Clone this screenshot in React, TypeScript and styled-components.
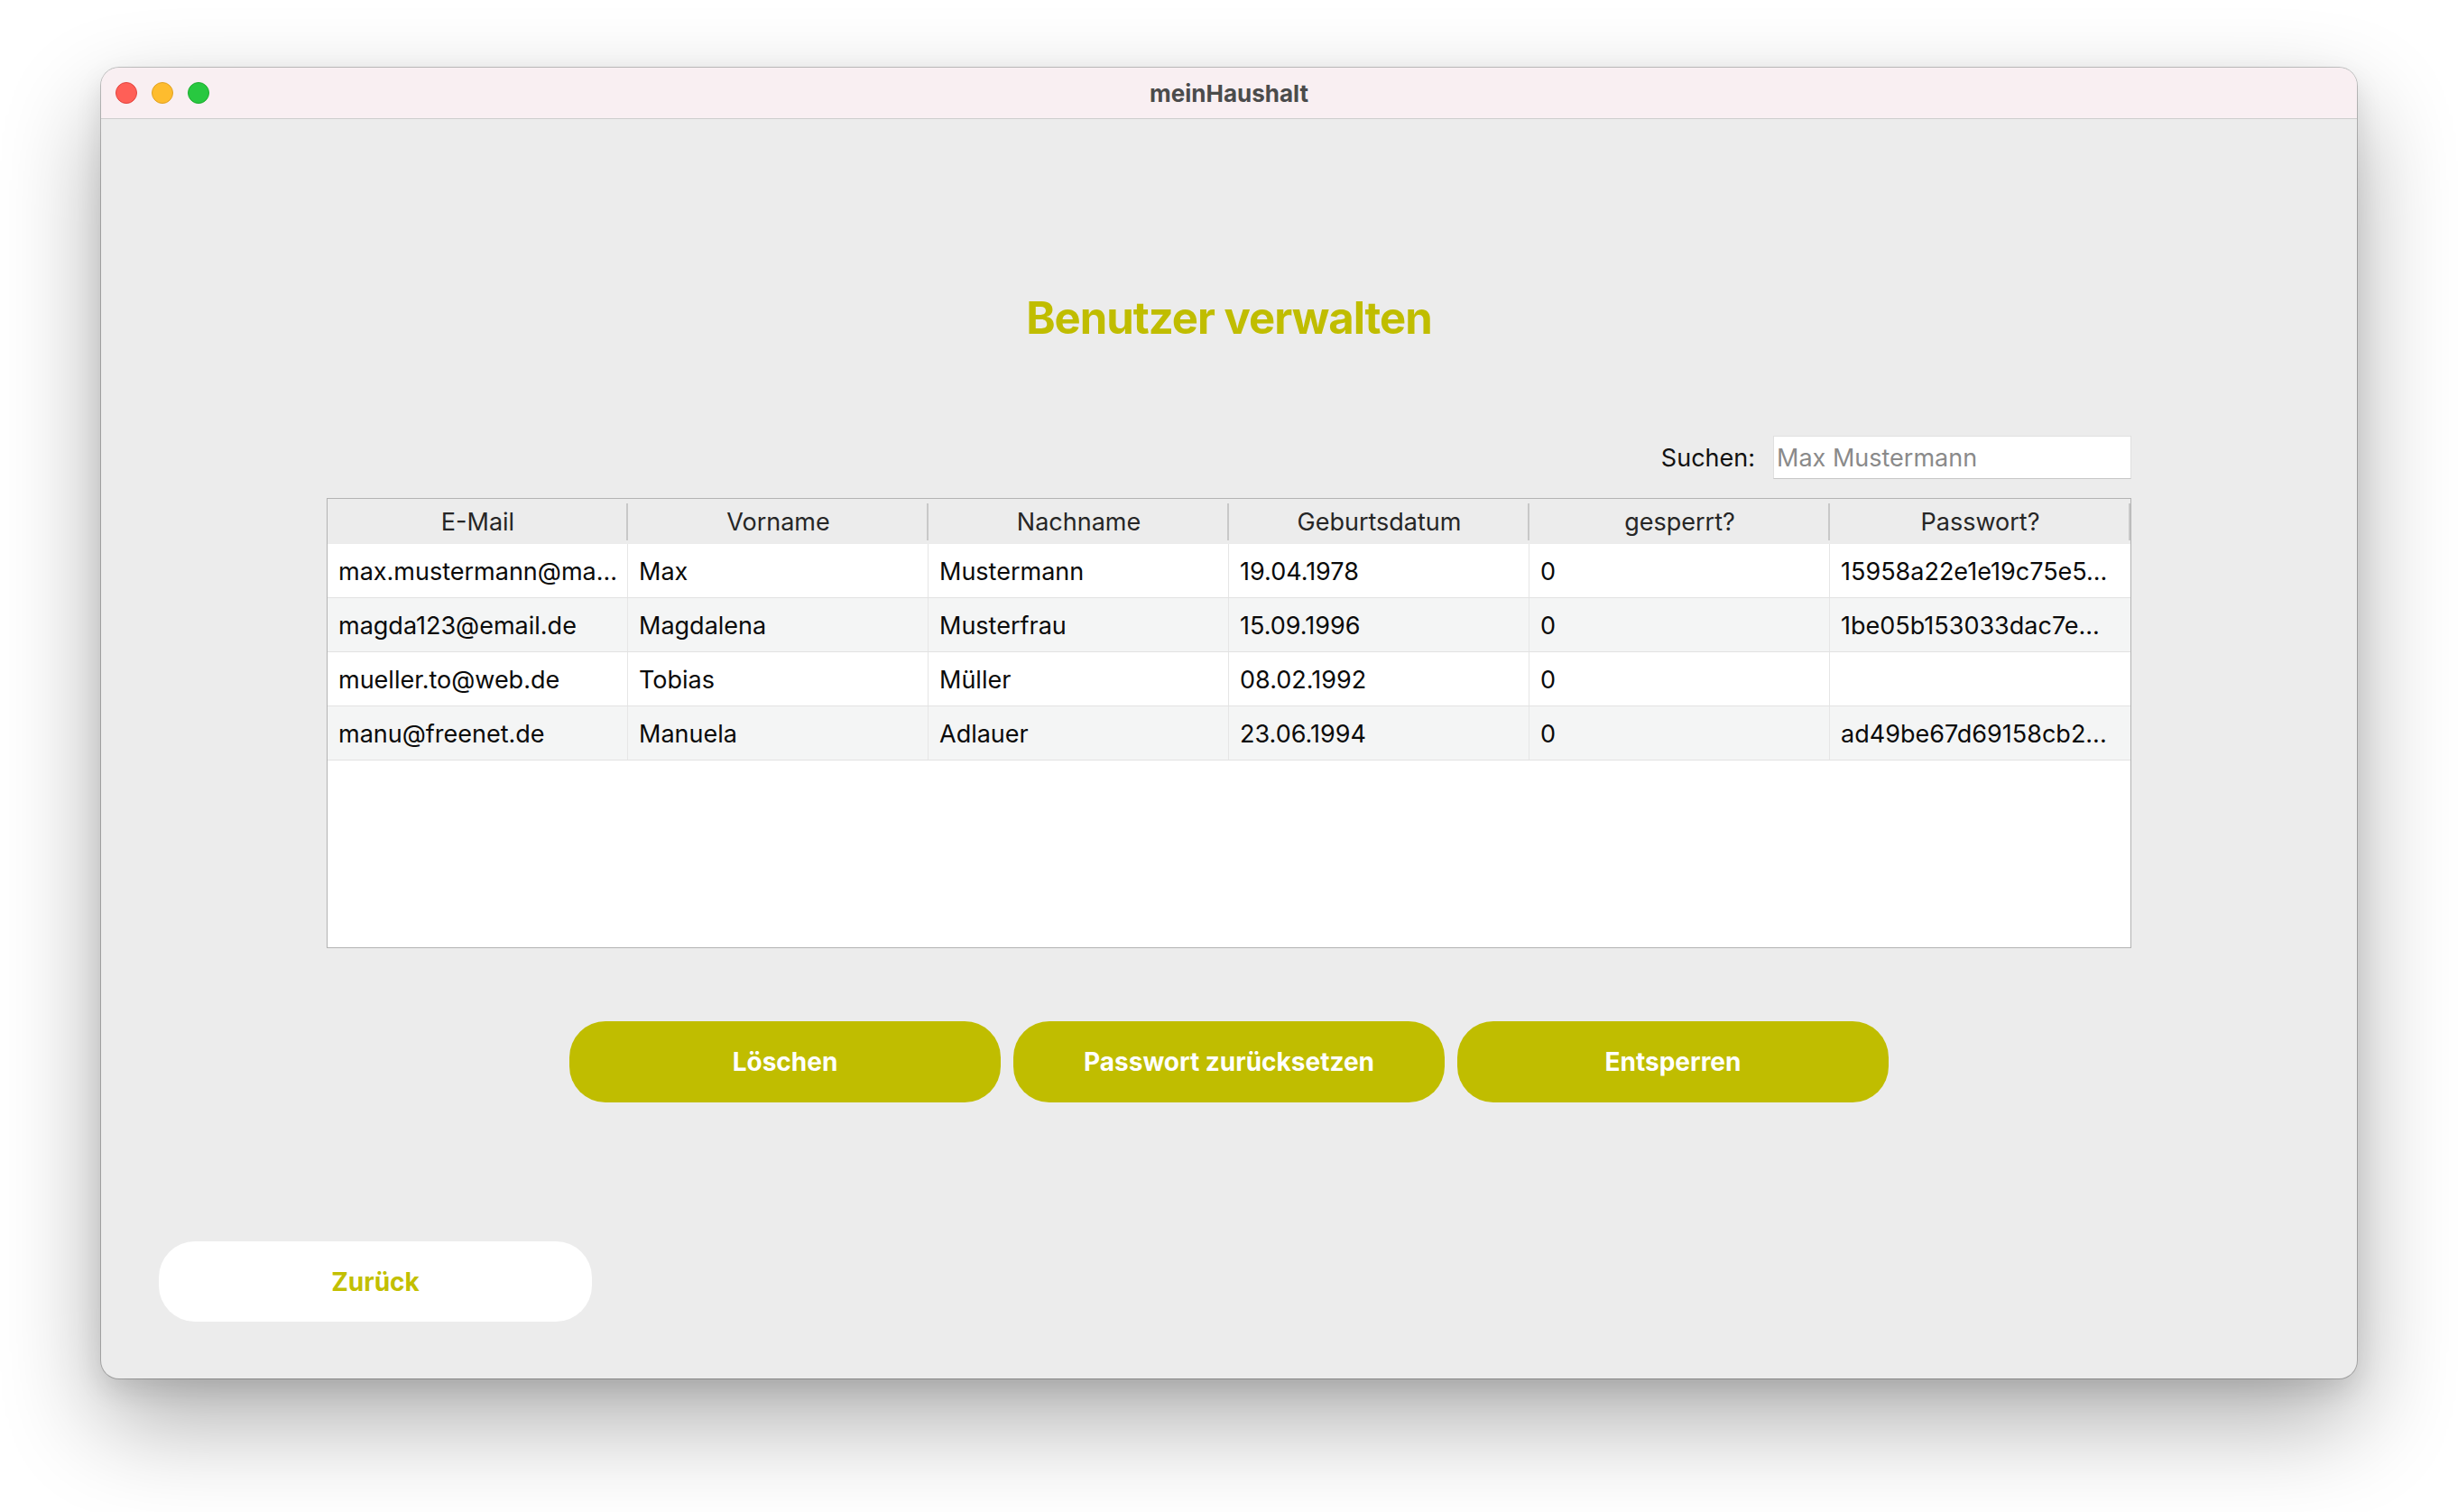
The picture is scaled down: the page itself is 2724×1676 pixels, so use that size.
import styled, { createGlobalStyle } from 'styled-components';

const GlobalStyle = createGlobalStyle`
  html, body {
    margin: 0;
    padding: 0;
    background: #ffffff;
  }
  body {
    font-family: Inter, "Noto Sans", "Liberation Sans", sans-serif;
  }
`;

const Page = styled.div`
  width: 2724px;
  height: 1676px;
  box-sizing: border-box;
  padding-top: 75px;
  display: flex;
  justify-content: center;
  align-items: flex-start;
  overflow: hidden;
`;

const Window = styled.div`
  width: 2500px;
  height: 1453px;
  border-radius: 20px;
  background: #ececec;
  overflow: hidden;
  display: flex;
  flex-direction: column;
  box-shadow: 0 0 0 1px rgba(0, 0, 0, 0.22), 0 48px 110px rgba(0, 0, 0, 0.32),
    0 12px 30px rgba(0, 0, 0, 0.1);
`;

const TitleBar = styled.div`
  height: 57px;
  flex-shrink: 0;
  box-sizing: border-box;
  background: #f9eff2;
  border-bottom: 1px solid #cdcdcd;
  display: grid;
  grid-template-columns: 1fr auto 1fr;
  align-items: center;
`;

const Lights = styled.div`
  display: flex;
  gap: 16px;
  padding-left: 16px;
`;

const Light = styled.span<{ $fill: string; $ring: string }>`
  width: 24px;
  height: 24px;
  border-radius: 50%;
  box-sizing: border-box;
  background: ${(p) => p.$fill};
  border: 1px solid ${(p) => p.$ring};
`;

const WindowTitle = styled.div`
  font-size: 26px;
  font-weight: 700;
  color: #4b4b4b;
`;

const Content = styled.main`
  flex: 1;
  display: flex;
  flex-direction: column;
  align-items: center;
  padding: 0 64px 65px;
`;

const Heading = styled.h1`
  margin: 191px 0 0;
  font-size: 49px;
  line-height: 60px;
  letter-spacing: -1px;
  font-weight: 700;
  color: #c0bd00;
`;

const SearchRow = styled.div`
  width: 2000px;
  height: 48px;
  margin-top: 100px;
  display: flex;
  justify-content: flex-end;
  align-items: center;
  gap: 20px;
`;

const Label = styled.label`
  font-size: 27px;
  color: #111111;
`;

const SearchInput = styled.input`
  width: 397px;
  height: 48px;
  box-sizing: border-box;
  border: 1px solid #e0e0e0;
  border-bottom-color: #c6c6c6;
  background: #ffffff;
  padding: 0 3px;
  font-family: inherit;
  font-size: 27px;
  color: #111;
  outline: none;
  &::placeholder {
    color: #8a8a8a;
  }
`;

const Table = styled.div`
  width: 2000px;
  height: 499px;
  margin-top: 21px;
  box-sizing: border-box;
  border: 1px solid #b3b3b3;
  background: #ffffff;
`;

const HeaderRow = styled.div`
  display: grid;
  grid-template-columns: repeat(6, 1fr);
  height: 50px;
  background: #ececec;
`;

const HeaderCell = styled.div`
  position: relative;
  display: flex;
  align-items: center;
  justify-content: center;
  font-size: 27px;
  color: #262626;
  &::after {
    content: '';
    position: absolute;
    right: 0;
    top: 5px;
    bottom: 4px;
    width: 2px;
    background: #c8c8c8;
  }
`;

const Row = styled.div<{ $alt?: boolean }>`
  display: grid;
  grid-template-columns: repeat(6, 1fr);
  height: 60px;
  box-sizing: border-box;
  border-bottom: 1px solid #e2e2e2;
  background: ${(p) => (p.$alt ? '#f4f5f5' : '#ffffff')};
`;

const Cell = styled.div`
  display: flex;
  align-items: center;
  padding: 1px 12px 0;
  border-right: 1px solid #e6e6e6;
  font-size: 27px;
  color: #0a0a0a;
  white-space: nowrap;
  overflow: hidden;
  &:last-child {
    border-right: none;
  }
`;

const ButtonRow = styled.div`
  display: flex;
  gap: 14px;
  margin-top: 81px;
`;

const Button = styled.button<{ $light?: boolean }>`
  width: 478px;
  height: 90px;
  border: none;
  border-radius: 40px;
  font-family: inherit;
  font-size: 28px;
  font-weight: 700;
  cursor: pointer;
  background: ${(p) => (p.$light ? '#ffffff' : '#c0bd00')};
  color: ${(p) => (p.$light ? '#c2bf00' : '#ffffff')};
`;

const BackButton = styled(Button)`
  align-self: flex-start;
  width: 480px;
  height: 89px;
  margin-top: 154px;
`;

const headers = ['E-Mail', 'Vorname', 'Nachname', 'Geburtsdatum', 'gesperrt?', 'Passwort?'];

const users = [
  ['max.mustermann@ma...', 'Max', 'Mustermann', '19.04.1978', '0', '15958a22e1e19c75e5...'],
  ['magda123@email.de', 'Magdalena', 'Musterfrau', '15.09.1996', '0', '1be05b153033dac7e...'],
  ['mueller.to@web.de', 'Tobias', 'Müller', '08.02.1992', '0', ''],
  ['manu@freenet.de', 'Manuela', 'Adlauer', '23.06.1994', '0', 'ad49be67d69158cb2...'],
];

export default function App() {
  return (
    <>
      <GlobalStyle />
      <Page>
        <Window>
          <TitleBar>
            <Lights>
              <Light $fill="#ff5f57" $ring="#e1443e" />
              <Light $fill="#febc2e" $ring="#dfa123" />
              <Light $fill="#28c840" $ring="#1dab2e" />
            </Lights>
            <WindowTitle>meinHaushalt</WindowTitle>
            <div />
          </TitleBar>
          <Content>
            <Heading>Benutzer verwalten</Heading>
            <SearchRow>
              <Label htmlFor="suche">Suchen:</Label>
              <SearchInput id="suche" placeholder="Max Mustermann" />
            </SearchRow>
            <Table>
              <HeaderRow>
                {headers.map((h) => (
                  <HeaderCell key={h}>{h}</HeaderCell>
                ))}
              </HeaderRow>
              {users.map((u, i) => (
                <Row key={i} $alt={i % 2 === 1}>
                  {u.map((c, j) => (
                    <Cell key={j}>{c}</Cell>
                  ))}
                </Row>
              ))}
            </Table>
            <ButtonRow>
              <Button>Löschen</Button>
              <Button>Passwort zurücksetzen</Button>
              <Button>Entsperren</Button>
            </ButtonRow>
            <BackButton $light>Zurück</BackButton>
          </Content>
        </Window>
      </Page>
    </>
  );
}
